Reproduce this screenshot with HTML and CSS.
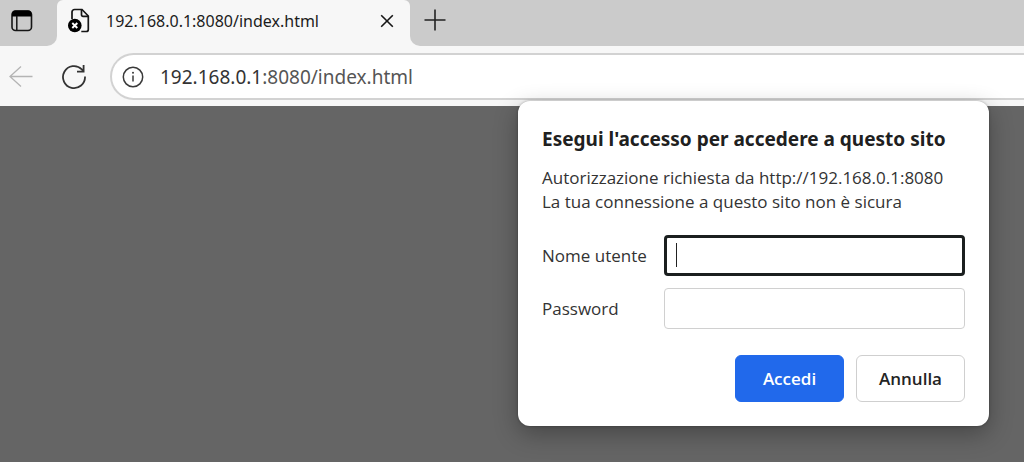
FILE: index.html
```
<!DOCTYPE html>
<html lang="it">
<head>
<meta charset="utf-8">
<meta name="viewport" content="width=device-width, initial-scale=1">
<title>192.168.0.1:8080/index.html</title>
<link rel="stylesheet" href="styles.css">
</head>
<body>
<div class="browser">
  <header class="chrome">
    <div class="tab-strip">
      <div class="strip-start">
        <button class="icon-button" type="button" aria-label="Menu schede">
          <svg width="22" height="22" viewBox="0 0 22 22"><rect x="1" y="1" width="19.5" height="19.5" rx="3.5" fill="none" stroke="#161616" stroke-width="1.6"/><path d="M1 6.400V4a3.500 3.500 0 0 1 3.500-3.500h12.500a3.500 3.500 0 0 1 3.500 3.500v2.400z" fill="#000"/><path d="M5.800 6v14.500" stroke="#161616" stroke-width="1.500"/></svg>
        </button>
      </div>
      <div class="tab-slot">
        <div class="tab">
          <svg class="tab-icon" width="22" height="26" viewBox="0 0 22 26"><path d="M4 11V4a2.500 2.500 0 0 1 2.500-2.500h7.500l6.300 6.500v13.500a2 2 0 0 1-2 2h-5" fill="none" stroke="#161616" stroke-width="1.700"/><path d="M13.500 1.800v5a1.500 1.500 0 0 0 1.500 1.500h5.200" fill="none" stroke="#161616" stroke-width="1.700"/><circle cx="6.800" cy="17.500" r="6.800" fill="#000"/><path d="M4.300 15l5 5M9.300 15l-5 5" stroke="#fff" stroke-width="1.900"/></svg>
          <span class="tab-title">192.168.0.1:8080/index.html</span>
          <button class="icon-button" type="button" aria-label="Chiudi scheda">
            <svg width="14" height="14" viewBox="0 0 14 14"><path d="M1.200 1.200l11.600 11.600M12.800 1.200L1.200 12.800" stroke="#161616" stroke-width="1.600"/></svg>
          </button>
        </div>
      </div>
      <div class="strip-end">
        <button class="icon-button" type="button" aria-label="Nuova scheda">
          <svg width="22" height="22" viewBox="0 0 22 22"><path d="M11 .5v21M.5 11h21" stroke="#222" stroke-width="1.600"/></svg>
        </button>
      </div>
    </div>
    <div class="toolbar">
      <button class="icon-button" type="button" aria-label="Indietro" disabled>
        <svg width="24" height="24" viewBox="0 0 24 24"><path d="M23.500 11.500H1M12 1.500L1 11.500l11 10" fill="none" stroke="#b4b4b4" stroke-width="1.300"/></svg>
      </button>
      <button class="icon-button reload" type="button" aria-label="Aggiorna">
        <svg width="26" height="26" viewBox="0 0 26 26"><path d="M24 12.500A11 11 0 1 1 20.800 5.300l1.800 1.900M22.600 1v6.700h-6.600" fill="none" stroke="#333" stroke-width="1.800"/></svg>
      </button>
      <div class="address">
        <svg width="22" height="22" viewBox="0 0 22 22"><circle cx="11" cy="11" r="9.700" fill="none" stroke="#3a3a3a" stroke-width="1.500"/><path d="M11 9.500v6" stroke="#3a3a3a" stroke-width="1.500"/><circle cx="11" cy="6.800" r="1" fill="#3a3a3a"/></svg>
        <span class="url"><span class="host">192.168.0.1</span>:8080/index.html</span>
      </div>
    </div>
  </header>
  <main class="page"></main>
  <form class="dialog" role="dialog" aria-labelledby="dialog-title">
    <h1 class="dialog-title" id="dialog-title">Esegui l'accesso per accedere a questo sito</h1>
    <p class="dialog-text">Autorizzazione richiesta da http://192.168.0.1:8080<br>La tua connessione a questo sito non è sicura</p>
    <div class="fields">
      <label for="user">Nome utente</label>
      <div class="field">
        <input class="text-box active" id="user" type="text">
        <span class="caret"></span>
      </div>
      <label for="password">Password</label>
      <div class="field">
        <input class="text-box" id="password" type="password">
      </div>
    </div>
    <div class="actions">
      <button class="button primary" type="button">Accedi</button>
      <button class="button" type="button">Annulla</button>
    </div>
  </form>
</div>
</body>
</html>
```
FILE: styles.css
```
* {
  box-sizing: border-box;
}

body {
  margin: 0;
  font-family: "Open Sans", "Noto Sans", sans-serif;
  font-size: 16px;
  color: #333;
}

.browser {
  position: relative;
  display: flex;
  flex-direction: column;
  min-height: 100vh;
  overflow: hidden;
}

.chrome {
  background: #f7f7f7;
}

.tab-strip {
  display: flex;
  height: 46px;
}

.icon-button {
  display: flex;
  padding: 0;
  border: 0;
  background: none;
}

.strip-start,
.strip-end {
  display: flex;
  background: #cbcbcb;
}

.strip-start {
  width: 57px;
  padding: 10px 0 0 11px;
  align-items: flex-start;
  border-bottom-right-radius: 10px;
}

.strip-end {
  flex: 1;
  padding: 9px 0 0 14px;
  align-items: flex-start;
  border-bottom-left-radius: 10px;
}

.tab-slot {
  width: 353px;
  background: linear-gradient(#cbcbcb 12px, #f7f7f7 12px);
}

.tab {
  display: flex;
  align-items: center;
  height: 100%;
  padding: 0 16px 5px 11px;
  background: #f7f7f7;
  border-radius: 6px 6px 0 0;
}

.tab-title {
  flex: 1;
  margin-left: 16px;
  color: #1c1c1c;
  font-family: "Noto Sans", "Open Sans", sans-serif;
}

.toolbar {
  display: flex;
  align-items: center;
  height: 60px;
  padding: 1px 0 0 9px;
}

.reload {
  margin-left: 28px;
}

.address {
  display: flex;
  flex: 1;
  align-items: center;
  gap: 16px;
  height: 47px;
  margin-left: 23px;
  padding-left: 10px;
  background: #fff;
  border: 2px solid #d2d2d2;
  border-right: 0;
  border-radius: 24px 0 0 24px;
}

.url {
  font-family: "Noto Sans", "Open Sans", sans-serif;
  font-size: 19px;
  color: #555;
}

.host {
  color: #333;
}

.page {
  flex: 1;
  background: #656565;
}

.dialog {
  position: absolute;
  top: 101px;
  right: 35px;
  width: 471px;
  padding: 24px;
  background: #fff;
  border-radius: 12px;
  box-shadow: 0 8px 24px rgba(0, 0, 0, 0.3), 0 0 3px rgba(0, 0, 0, 0.3);
  font-size: 17px;
}

.dialog-title {
  margin: 0;
  font-family: "Noto Sans", "Open Sans", sans-serif;
  font-size: 19px;
  line-height: 28px;
  font-weight: 700;
  color: #202020;
  white-space: nowrap;
}

.dialog-text {
  margin: 13px 0 21px;
  line-height: 24px;
  white-space: nowrap;
}

.fields {
  display: grid;
  grid-template-columns: 122px 1fr;
  row-gap: 12px;
  align-items: center;
}

.field {
  position: relative;
}

.text-box {
  display: block;
  width: 100%;
  height: 41px;
  padding: 0 12px;
  border: 1px solid #d0d0d0;
  border-radius: 4px;
  background: #fff;
  font: inherit;
  outline: 0;
}

.text-box.active {
  border: 3px solid #1b1f1f;
}

.caret {
  position: absolute;
  top: 8px;
  left: 12px;
  width: 1px;
  height: 24px;
  background: #222;
}

.actions {
  display: flex;
  justify-content: flex-end;
  gap: 12px;
  margin-top: 26px;
}

.button {
  width: 109px;
  height: 47px;
  padding: 0;
  border: 1px solid #cfcfcf;
  border-radius: 6px;
  background: #fff;
  color: #242424;
  font: inherit;
  font-weight: 600;
}

.button.primary {
  border-color: #2169eb;
  background: #2169eb;
  color: #fff;
}
```
